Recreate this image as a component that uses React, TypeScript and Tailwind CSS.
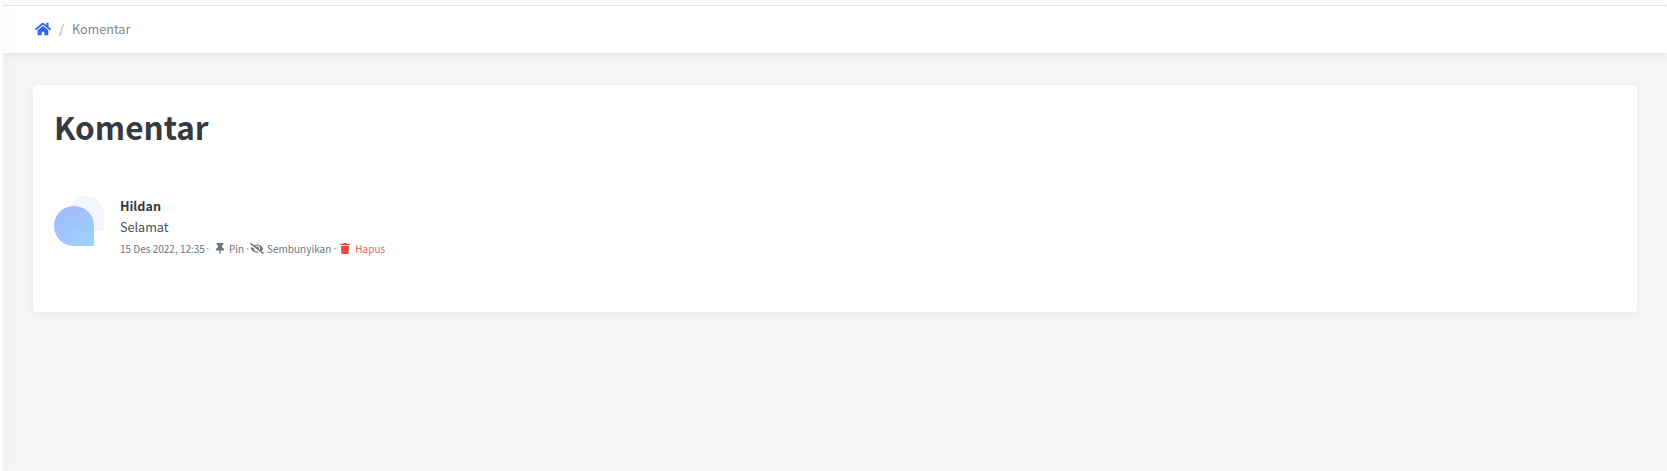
import React from 'react';
import { FaEyeSlash, FaHome, FaThumbtack, FaTrash } from 'react-icons/fa';

const font = "font-['Noto_Sans_CJK_SC','Noto_Sans',sans-serif]";

function Dot({ className }: { className: string }) {
  return <span className={`w-[3px] text-center font-['Liberation_Sans',sans-serif] ${className}`}>·</span>;
}

export default function App() {
  return (
    <div className={`h-[471px] bg-[#f4f5f7] flex ${font}`}>
      {/* collapsed sidebar edge */}
      <div className="w-[3px] bg-white shadow-[0_0_20px_rgba(0,0,0,0.1)] z-10" />
      <div className="flex-1 flex flex-col">
        <div className="h-[6px] bg-white border-b border-[#e9ecef]" />
        <nav className="h-[47px] bg-white shadow-[0_1px_8px_rgba(0,0,0,0.08)] flex items-center pl-[32px] pb-[1px]">
          <FaHome className="w-[16px] h-[16px] text-[#2f64f0]" />
          <span className="ml-[8px] text-[12.6px] text-[#9ca3af]">/</span>
          <span className="ml-[8px] text-[12.6px] text-[#7c8793]">Komentar</span>
        </nav>
        <main className="px-[30px] pt-[32px]">
          <div className="h-[227px] bg-white rounded-[4px] shadow-[0_2px_8px_rgba(0,0,0,0.05)] px-[21px] pt-[19px]">
            <h1 className="text-[31.5px] leading-[44px] font-bold text-[#343a40]">Komentar</h1>
            <div className="flex items-start gap-[24px] mt-[36px]">
              <div className="relative w-[42px] h-[50px] mt-[12px] shrink-0">
                <div className="absolute top-[10px] left-0 w-[40px] h-[40px] rounded-t-full rounded-bl-full bg-gradient-to-br from-[#a5b4fc] to-[#9ad6fe]" />
                <div className="absolute top-0 left-[15px] w-[35px] h-[35px] bg-[#9db5e8]/[0.12] rounded-t-full rounded-bl-full" />
              </div>
              <div className="flex flex-col pt-[11px]">
                <span className="text-[12.6px] leading-[21px] font-bold text-[#343a40]">Hildan</span>
                <span className="text-[12.6px] leading-[21px] text-[#495057]">Selamat</span>
                <div className="flex items-center mt-[1px] text-[10px] leading-[21px] text-[#6c757d]">
                  <span>15 Des 2022, 12:35</span>
                  <Dot className="ml-[1px]" />
                  <FaThumbtack className="ml-[6px] w-[10px] h-[11px]" />
                  <span className="ml-[4px]">Pin</span>
                  <Dot className="ml-[2px]" />
                  <FaEyeSlash className="ml-[1px] w-[14px] h-[11px]" />
                  <span className="ml-[3px]">Sembunyikan</span>
                  <Dot className="ml-[2px]" />
                  <FaTrash className="ml-[4px] w-[10px] h-[11px] text-[#ef4444]" />
                  <span className="ml-[5px] text-[#e8636b]">Hapus</span>
                </div>
              </div>
            </div>
          </div>
        </main>
      </div>
    </div>
  );
}
